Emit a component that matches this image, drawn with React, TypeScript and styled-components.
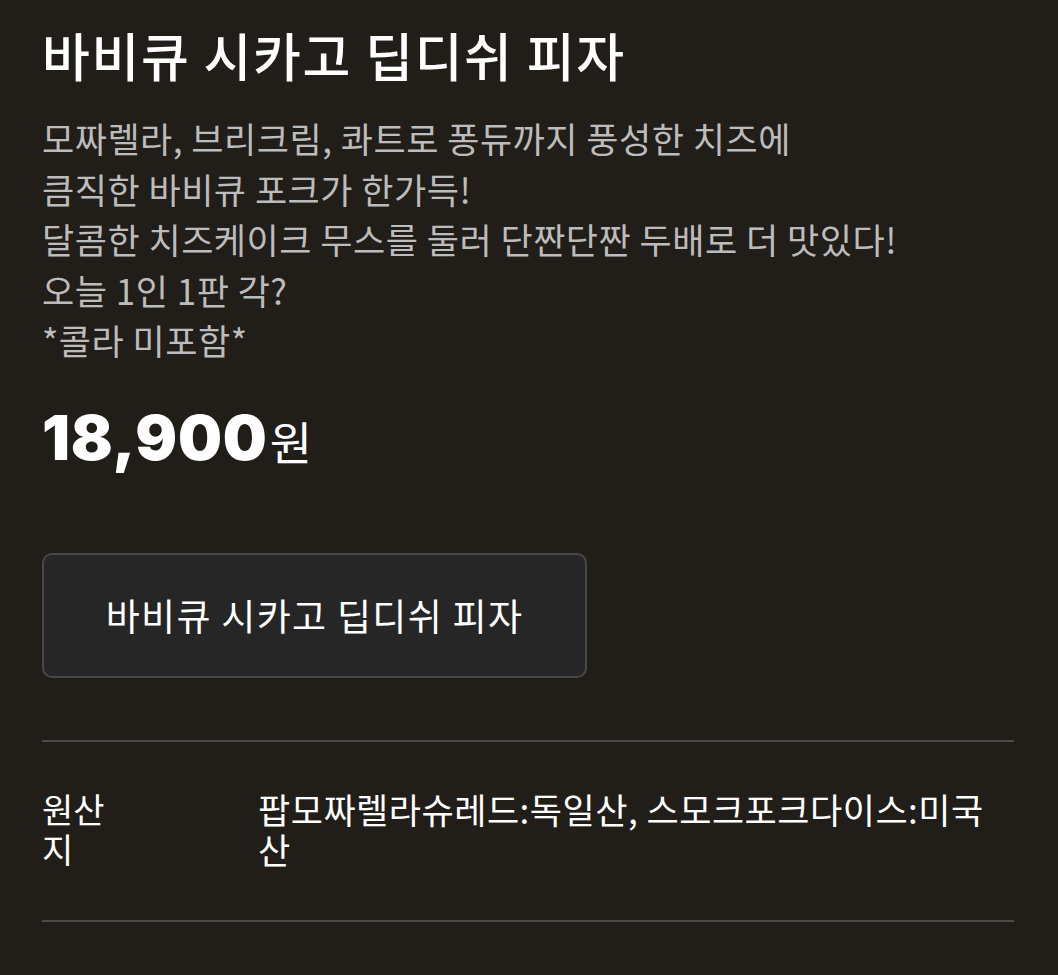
import styled, { createGlobalStyle } from "styled-components";

const GlobalStyle = createGlobalStyle`
	html, body {
		margin: 0;
		padding: 0;
		background: #211d18;
	}
	body {
		font-family: "Noto Sans CJK KR", "Noto Sans", sans-serif;
		color: #ffffff;
	}
`;

const Page = styled.div`
	min-height: 975px;
	padding: 22px 42px 0;
	box-sizing: border-box;
	background: #211d18;
`;

const Title = styled.h1`
	margin: 0;
	font-size: 52px;
	font-weight: 500;
	line-height: 66px;
	letter-spacing: 1.6px;
	color: #ffffff;
`;

const Description = styled.p`
	margin: 25px 0 0;
	font-size: 35px;
	font-weight: 400;
	line-height: 50.5px;
	letter-spacing: 0.5px;
	color: #bcbcbc;
	white-space: pre-line;
`;

const Price = styled.div`
	margin-top: 32px;
	display: flex;
	align-items: baseline;
	height: 80px;
	line-height: 80px;
	color: #ffffff;
`;

const Amount = styled.span`
	font-family: "Inter", "Roboto", sans-serif;
	font-size: 62px;
	font-weight: 900;
	letter-spacing: 0.8px;
`;

const Unit = styled.span`
	font-size: 46px;
	font-weight: 400;
	margin-left: 2px;
`;

const OptionButton = styled.button`
	margin-top: 75px;
	width: 545px;
	height: 125px;
	display: flex;
	align-items: center;
	justify-content: center;
	background: #262626;
	border: 2px solid #484848;
	border-radius: 10px;
	color: #ffffff;
	font-family: "Noto Sans CJK KR", "Noto Sans", sans-serif;
	font-size: 37px;
	font-weight: 400;
	letter-spacing: 1.3px;
	cursor: pointer;
`;

const InfoTable = styled.div`
	margin-top: 62px;
	width: 972px;
	border-top: 2px solid #4b4a48;
	border-bottom: 2px solid #4b4a48;
`;

const InfoRow = styled.div`
	display: grid;
	grid-template-columns: 216px 1fr;
	padding: 47px 0 51px;
`;

const InfoLabel = styled.div`
	width: 80px;
	font-size: 34px;
	line-height: 40px;
	word-break: break-all;
	color: #ffffff;
`;

const InfoValue = styled.div`
	font-size: 35px;
	line-height: 40px;
	letter-spacing: 0.5px;
	word-break: break-all;
	color: #ffffff;
`;

const App = () => {
	return (
		<>
			<GlobalStyle />
			<Page>
				<Title>바비큐 시카고 딥디쉬 피자</Title>
				<Description>
					{`모짜렐라, 브리크림, 콰트로 퐁듀까지 풍성한 치즈에
큼직한 바비큐 포크가 한가득!
달콤한 치즈케이크 무스를 둘러 단짠단짠 두배로 더 맛있다!
오늘 1인 1판 각?
*콜라 미포함*`}
				</Description>
				<Price>
					<Amount>18,900</Amount>
					<Unit>원</Unit>
				</Price>
				<OptionButton>바비큐 시카고 딥디쉬 피자</OptionButton>
				<InfoTable>
					<InfoRow>
						<InfoLabel>원산지</InfoLabel>
						<InfoValue>팝모짜렐라슈레드:독일산, 스모크포크다이스:미국산</InfoValue>
					</InfoRow>
				</InfoTable>
			</Page>
		</>
	);
};

export default App;
